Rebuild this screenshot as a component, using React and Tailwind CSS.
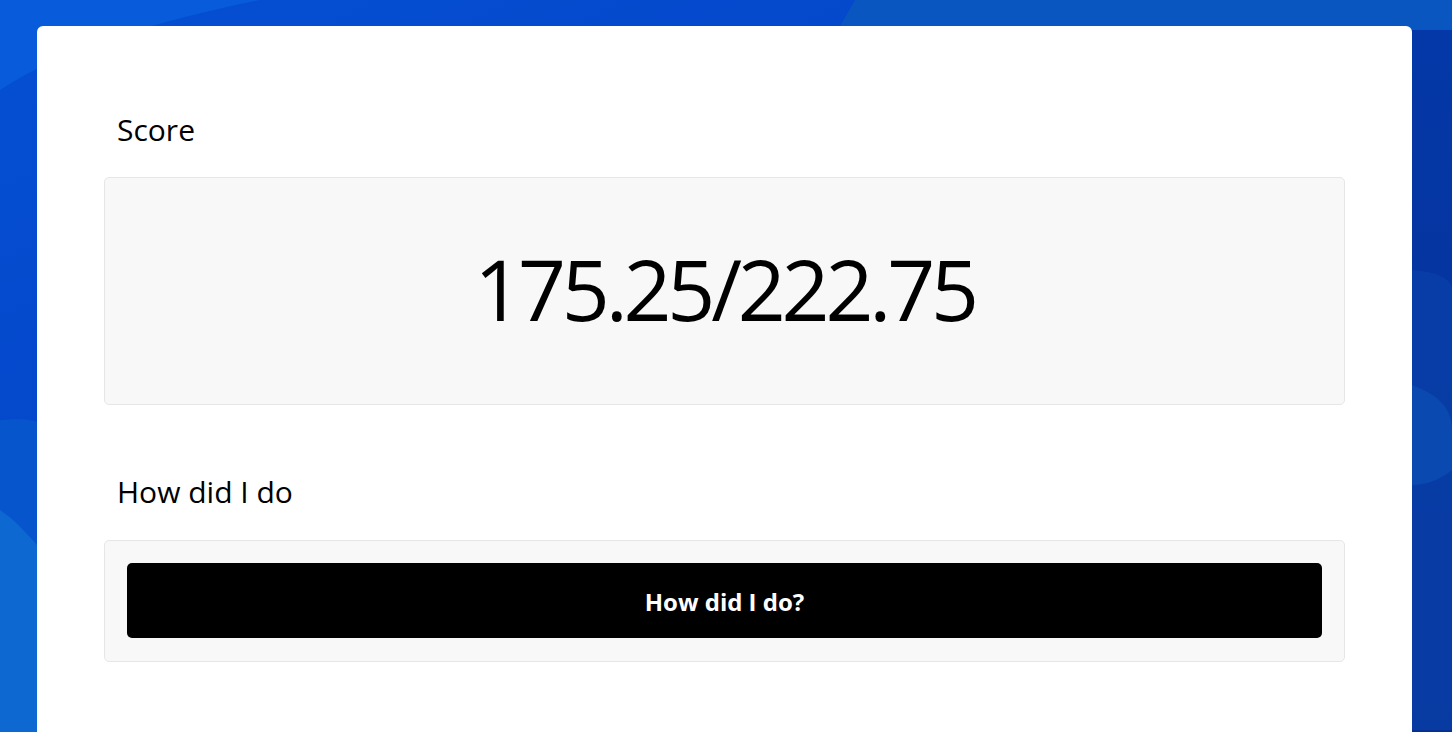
import React from 'react';

// Blue wallpaper behind the card, drawn as a few soft shapes
function Wallpaper() {
  return (
    <svg
      className="absolute inset-0 w-full h-full"
      viewBox="0 0 1452 732"
      preserveAspectRatio="none"
      xmlns="http://www.w3.org/2000/svg"
    >
      <defs>
        <linearGradient id="base" x1="0" y1="0" x2="1" y2="1">
          <stop offset="0" stopColor="#0550d4" />
          <stop offset="0.5" stopColor="#0443c6" />
          <stop offset="1" stopColor="#05329c" />
        </linearGradient>
        <linearGradient id="right" x1="0" y1="0" x2="0" y2="1">
          <stop offset="0" stopColor="#0438a8" />
          <stop offset="1" stopColor="#062f92" />
        </linearGradient>
      </defs>
      <rect width="1452" height="732" fill="url(#base)" />
      <path d="M0 0 H260 C160 20 60 50 0 90 Z" fill="#0a60dc" />
      <path d="M0 90 C60 50 160 20 260 0 H0 Z" fill="#0758d8" opacity="0.6" />
      <path d="M855 0 H1452 V30 C1300 40 1100 36 840 26 Z" fill="#0a56c0" />
      <path d="M1412 30 H1452 V732 H1412 Z" fill="url(#right)" />
      <path d="M1412 270 C1440 272 1452 280 1452 290 V730 H1412 Z" fill="#0a40aa" opacity="0.7" />
      <path d="M1412 385 C1440 395 1452 410 1452 430 V470 C1440 480 1425 485 1412 485 Z" fill="#0b4cb2" opacity="0.8" />
      <path d="M0 420 C20 418 35 420 37 422 V732 H0 Z" fill="#0755cc" />
      <path d="M0 510 C15 520 28 535 37 545 V732 H0 Z" fill="#0d68d2" />
    </svg>
  );
}

function Section({ label, children, className }) {
  return (
    <div className={className}>
      <div className="px-[13px] text-[30px] leading-[40px] text-black">{label}</div>
      {children}
    </div>
  );
}

export default function App() {
  return (
    <div
      className="relative w-full h-[732px] overflow-hidden"
      style={{ fontFamily: '"Open Sans", "Noto Sans", sans-serif' }}
    >
      <Wallpaper />
      <div className="relative h-full pl-[37px] pr-[40px] pt-[26px]">
        <div className="h-full bg-white rounded-t-md px-[67px] pt-[84px]">
          <Section label="Score">
            <div className="mt-[27px] h-[228px] bg-[#f8f8f8] border border-[#e6e6e6] rounded-[5px] flex items-center justify-center">
              <span className="text-[84px] tracking-[-0.05em] text-black leading-none pb-[4px]">
                175.25/222.75
              </span>
            </div>
          </Section>
          <Section label="How did I do" className="mt-[67px]">
            <div className="mt-[28px] bg-[#f8f8f8] border border-[#e6e6e6] rounded-[5px] px-[22px] pt-[22px] pb-[23px]">
              <button
                type="button"
                className="w-full h-[75px] bg-black rounded-[5px] text-white text-[24px] font-bold flex items-center justify-center pt-[3px]"
              >
                How did I do?
              </button>
            </div>
          </Section>
        </div>
      </div>
    </div>
  );
}
